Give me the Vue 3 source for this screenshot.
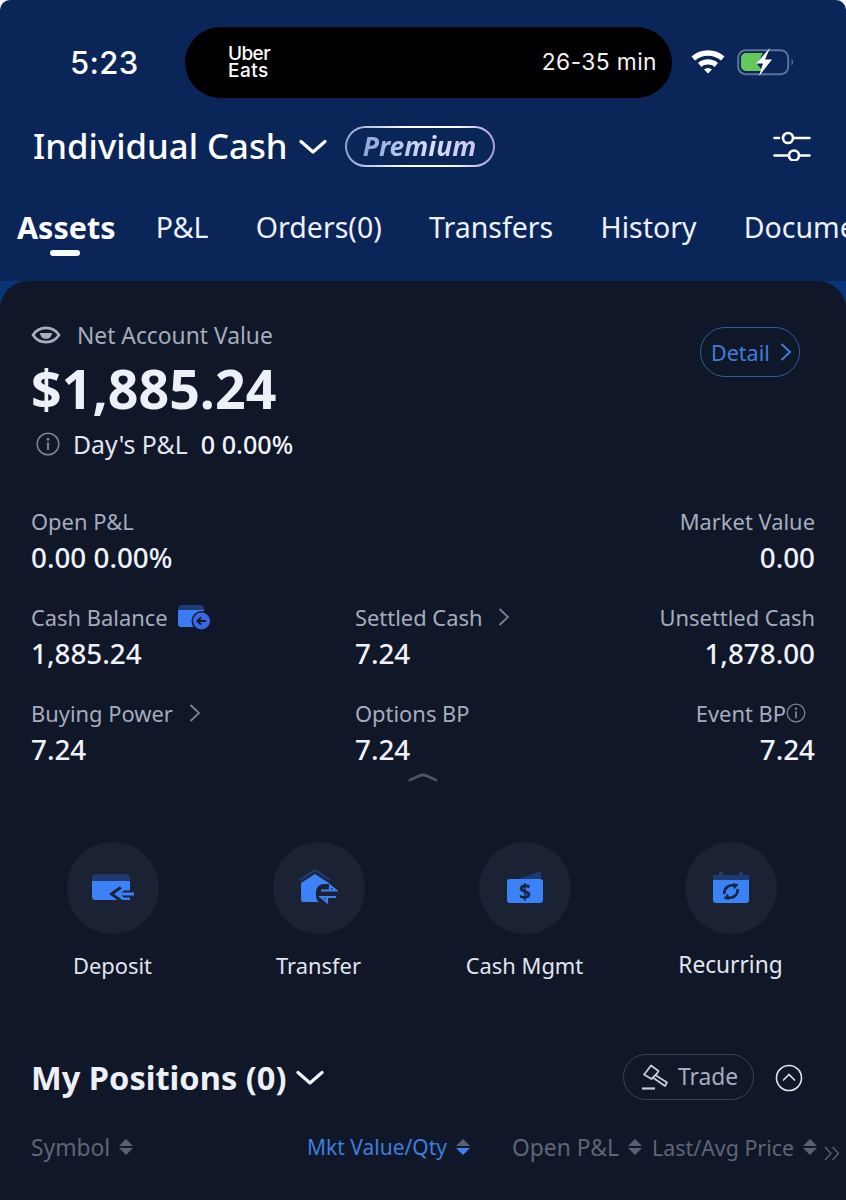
<script setup>
const tabs = ['Assets', 'P&L', 'Orders(0)', 'Transfers', 'History', 'Documents']
</script>

<template>
  <div class="page">
    <header class="head">
      <div class="status">
        <span class="time">5:23</span>
        <div class="island">
          <span class="uber"><span class="uber-line">Uber</span><span class="uber-line eats">Eats</span></span>
          <span class="eta">26-35 min</span>
        </div>
        <svg class="wifi" width="36" height="26" viewBox="0 0 36 26">
          <path d="M1.500 8.500C10.500 0 25.500 0 34.500 8.500L31 12.500C24 6 12 6 5 12.500Z" fill="#fff" />
          <path d="M8 15C13.500 10 22.500 10 28 15L24.500 19C21 15.800 15 15.800 11.500 19Z" fill="#fff" />
          <path d="M14 21.500C16.500 19.500 19.500 19.500 22 21.500L18 25.500Z" fill="#fff" />
        </svg>
        <svg class="battery" width="60" height="28" viewBox="0 0 60 28">
          <rect x="1.200" y="2.200" width="50" height="24" rx="7.500" fill="none" stroke="#5f7399" stroke-width="2" />
          <path d="M9 5H26L20 16L26 23H9A5 5 0 0 1 4 18V10A5 5 0 0 1 9 5Z" fill="#63c95a" />
          <path d="M54.500 10.500C56.500 11.500 56.500 16.500 54.500 17.500Z" fill="#5f7399" />
          <path d="M33 0L19 15.500H26L22 28L35 11.500H28Z" fill="#fff" />
        </svg>
      </div>

      <div class="title-row">
        <h1 class="title">Individual Cash</h1>
        <svg class="chev" width="28" height="16" viewBox="0 0 28 16">
          <path d="M2 2.500L14 13L26 2.500" fill="none" stroke="#fff" stroke-width="3.200" stroke-linecap="round" stroke-linejoin="round" />
        </svg>
        <div class="premium"><span class="premium-in"><span class="premium-text">Premium</span></span></div>
        <svg class="sliders" width="38" height="30" viewBox="0 0 38 30">
          <g fill="none" stroke="#fff" stroke-width="2.600" stroke-linecap="round">
            <path d="M1.500 7H6M20.500 7H36.500M1.500 24.500H14.500M27.500 24.500H36.500" />
            <circle cx="15" cy="7" r="5" />
            <circle cx="21" cy="24.500" r="5" />
          </g>
        </svg>
      </div>

      <nav class="tabs">
        <span v-for="(t, i) in tabs" :key="t" class="tab" :class="{ on: i === 0 }">{{ t }}</span>
      </nav>
    </header>

    <main class="card">
      <section class="net">
        <div class="net-main">
          <div class="net-label">
            <svg width="30" height="22" viewBox="0 0 30 22">
              <path d="M2 11C8 1.500 22 1.500 28 11C22 20.500 8 20.500 2 11Z" fill="none" stroke="#a8aebd" stroke-width="2.600" />
              <path d="M9 9H21A6 6 0 0 1 9 9Z" fill="#a8aebd" />
            </svg>
            <span>Net Account Value</span>
          </div>
          <div class="net-value">$1,885.24</div>
          <div class="days">
            <svg width="24" height="24" viewBox="0 0 24 24">
              <circle cx="12" cy="12" r="10.800" fill="none" stroke="#7c8290" stroke-width="1.500" />
              <path d="M12 10.500V18" stroke="#7c8290" stroke-width="2.200" />
              <circle cx="12" cy="7.300" r="1.500" fill="#7c8290" />
            </svg>
            <span class="days-label">Day's P&amp;L</span>
            <span class="days-val">0 0.00%</span>
          </div>
        </div>
        <div class="detail">
          <span>Detail</span>
          <svg width="12" height="20" viewBox="0 0 12 20"><path d="M1.500 2L10 10L1.500 18" fill="none" stroke="#3d7fdc" stroke-width="2" /></svg>
        </div>
      </section>

      <section class="metrics">
        <div class="m">
          <div class="ml">Open P&amp;L</div>
          <div class="mv">0.00 0.00%</div>
        </div>
        <div></div>
        <div class="m end">
          <div class="ml">Market Value</div>
          <div class="mv">0.00</div>
        </div>

        <div class="m">
          <div class="ml">
            Cash Balance
            <svg width="34" height="28" viewBox="0 0 34 28">
              <path d="M1 6A4 4 0 0 1 5 2H23A4 4 0 0 1 27 6V8H1Z" fill="#1f3a75" />
              <path d="M1 7H27V24H4A3 3 0 0 1 1 21Z" fill="#3b7cf0" />
              <circle cx="24.500" cy="18" r="10" fill="#0f1729" />
              <circle cx="24.500" cy="18" r="8.500" fill="#3a66e0" />
              <path d="M29 18H21M24 14.500L20.500 18L24 21.500" fill="none" stroke="#0f1729" stroke-width="2" />
            </svg>
          </div>
          <div class="mv">1,885.24</div>
        </div>
        <div class="m">
          <div class="ml">
            Settled Cash
            <svg class="arrow" width="12" height="20" viewBox="0 0 12 20"><path d="M1.500 2L10 10L1.500 18" fill="none" stroke="#7b808e" stroke-width="1.800" /></svg>
          </div>
          <div class="mv">7.24</div>
        </div>
        <div class="m end">
          <div class="ml">Unsettled Cash</div>
          <div class="mv">1,878.00</div>
        </div>

        <div class="m">
          <div class="ml">
            Buying Power
            <svg class="arrow" width="12" height="20" viewBox="0 0 12 20"><path d="M1.500 2L10 10L1.500 18" fill="none" stroke="#7b808e" stroke-width="1.800" /></svg>
          </div>
          <div class="mv">7.24</div>
        </div>
        <div class="m">
          <div class="ml">Options BP</div>
          <div class="mv">7.24</div>
        </div>
        <div class="m end">
          <div class="ml event">
            Event BP
            <svg width="20" height="20" viewBox="0 0 20 20">
              <circle cx="10" cy="10" r="8.800" fill="none" stroke="#7c8290" stroke-width="1.300" />
              <path d="M10 8.500V15" stroke="#7c8290" stroke-width="1.800" />
              <circle cx="10" cy="5.800" r="1.200" fill="#7c8290" />
            </svg>
          </div>
          <div class="mv">7.24</div>
        </div>
      </section>

      <div class="collapse">
        <svg width="30" height="9" viewBox="0 0 30 9"><path d="M2 7L12 2.500Q15 1.500 18 2.500L28 7" fill="none" stroke="#4b5364" stroke-width="3" stroke-linecap="round" stroke-linejoin="round" /></svg>
      </div>

      <section class="actions">
        <div class="act">
          <div class="circle">
            <svg width="42" height="30" viewBox="0 0 42 30">
              <path d="M0 5A4 4 0 0 1 4 1H34A4 4 0 0 1 38 5V8H0Z" fill="#1f3a6e" />
              <path d="M0 8H38V27H3A3 3 0 0 1 0 24Z" fill="#3b82f6" />
              <path d="M42 21H24M30 16L23 21L30 26" fill="none" stroke="#1a2233" stroke-width="7" />
              <path d="M42 21H27M31 16.500L24.500 21L31 25.500" fill="none" stroke="#3b82f6" stroke-width="2.800" />
            </svg>
          </div>
          <span class="act-label">Deposit</span>
        </div>
        <div class="act">
          <div class="circle">
            <svg width="38" height="36" viewBox="0 0 38 36">
              <path d="M0 10L15 0L30 10" fill="none" stroke="#1f3a6e" stroke-width="2.500" />
              <path d="M1 13L15 4L29 13V32H3A2 2 0 0 1 1 30Z" fill="#3b82f6" />
              <rect x="16" y="14" width="22" height="20" rx="8" fill="#1a2233" />
              <path d="M21 20.500H36L30 15.500V20.500" fill="none" stroke="#3b82f6" stroke-width="2.200" />
              <path d="M36 27H21L27 32V27" fill="none" stroke="#3b82f6" stroke-width="2.200" />
            </svg>
          </div>
          <span class="act-label">Transfer</span>
        </div>
        <div class="act">
          <div class="circle">
            <svg width="38" height="34" viewBox="0 0 38 34">
              <path d="M12 8L32 1A2 2 0 0 1 35 3V8Z" fill="#1f3a6e" />
              <rect x="1" y="8" width="36" height="24" rx="3" fill="#3b82f6" />
              <text class="dollar" x="19" y="27.500" text-anchor="middle">$</text>
            </svg>
          </div>
          <span class="act-label">Cash Mgmt</span>
        </div>
        <div class="act">
          <div class="circle">
            <svg width="36" height="34" viewBox="0 0 36 34">
              <path d="M0 4H6V1H10V4H26V1H30V4H36V9H0Z" fill="#1f3a6e" />
              <path d="M0 9H36V29A3 3 0 0 1 33 32H3A3 3 0 0 1 0 29Z" fill="#3b82f6" />
              <g fill="none" stroke="#17233f" stroke-width="2.600">
                <path d="M11.500 23A7.500 7.500 0 0 1 22 15" />
                <path d="M24.500 18A7.500 7.500 0 0 1 14 26" />
              </g>
              <path d="M20 12L25.500 13.500L21 18.500ZM16 29L10.500 27.500L15 22.500Z" fill="#17233f" />
            </svg>
          </div>
          <span class="act-label last">Recurring</span>
        </div>
      </section>

      <section class="pos-head">
        <h2 class="pos-title">My Positions (0)</h2>
        <svg class="chev2" width="28" height="16" viewBox="0 0 28 16">
          <path d="M2 2.500L14 13L26 2.500" fill="none" stroke="#f0f2f8" stroke-width="3.200" stroke-linecap="round" stroke-linejoin="round" />
        </svg>
        <div class="trade">
          <svg width="28" height="26" viewBox="0 0 28 26">
            <g fill="none" stroke="#c8ccd6" stroke-width="1.800" stroke-linejoin="round">
              <path d="M10 1.500L17.500 7L16 9.500L10.500 15L3 10.500L5.500 7.500Z" />
              <path d="M15 11.500L26 18.500L24 22L12.500 14" />
            </g>
            <path d="M1 24.500H14" stroke="#c8ccd6" stroke-width="2.200" />
          </svg>
          <span>Trade</span>
        </div>
        <svg class="up" width="28" height="28" viewBox="0 0 28 28">
          <circle cx="14" cy="14" r="12.500" fill="none" stroke="#dfe2ea" stroke-width="1.600" />
          <path d="M8 16.500L14 10.500L20 16.500" fill="none" stroke="#dfe2ea" stroke-width="1.600" />
        </svg>
      </section>

      <section class="cols">
        <div class="col c1">Symbol<i class="sort"><b></b><b></b></i></div>
        <div class="col c2">Mkt Value/Qty<i class="sort active"><b></b><b></b></i></div>
        <div class="col c3">Open P&amp;L<i class="sort"><b></b><b></b></i></div>
        <div class="col c4">Last/Avg Price<i class="sort"><b></b><b></b></i></div>
        <svg class="more" width="16" height="15" viewBox="0 0 16 15">
          <path d="M1 1L7 7.500L1 14M8.500 1L14.500 7.500L8.500 14" fill="none" stroke="#5a6070" stroke-width="1.400" />
        </svg>
      </section>
    </main>
  </div>
</template>

<style>
html, body { margin: 0; background: #f5f6f8; }
</style>

<style scoped>
.page {
  width: 846px;
  height: 1200px;
  overflow: hidden;
  background: linear-gradient(#0a2558 281px, #0a3478 281px);
  border-radius: 10px 10px 0 0;
  font-family: "Noto Sans", "Open Sans", sans-serif;
  display: flex;
  flex-direction: column;
  position: relative;
}
.head {
  height: 281px;
  flex: none;
  box-sizing: border-box;
  padding-top: 27px;
  color: #fff;
  overflow: hidden;
}
.status {
  display: flex;
  align-items: center;
  height: 71px;
}
.time {
  font: 500 31px/1 Inter, sans-serif;
  width: 185px;
  box-sizing: border-box;
  padding-left: 70px;
  letter-spacing: 0.4px;
  margin-top: -1px;
}
.island {
  width: 487px;
  height: 71px;
  background: #000;
  border-radius: 36px;
  display: flex;
  align-items: center;
  justify-content: space-between;
  box-sizing: border-box;
  padding: 0 15px 0 43px;
}
.uber {
  display: flex;
  flex-direction: column;
  gap: 1px;
  font: 500 19px/16px Inter, sans-serif;
  letter-spacing: -0.6px;
  margin-top: -1px;
}
.uber-line { display: block; }
.eats { letter-spacing: 0.5px; }
.eta {
  font: 400 22.800px/1 Inter, sans-serif;
  letter-spacing: 0.4px;
  color: #f2f2f2;
}
.wifi { margin-left: 18px; margin-top: -4px; }
.battery { margin-left: 11px; margin-top: -2px; }

.title-row {
  display: flex;
  align-items: center;
  height: 42px;
  margin-top: 27px;
  padding-left: 33px;
}
.title {
  margin: 0;
  font-size: 34.700px;
  font-weight: 500;
  line-height: 42px;
  color: #fff;
}
.chev { margin-left: 11px; margin-top: 1px; }
.premium {
  margin-left: 18px;
  width: 150px;
  height: 41px;
  border-radius: 21px;
  padding: 2px;
  box-sizing: border-box;
  background: linear-gradient(95deg, #8da0d0, #ffffff 40%, #ffffff 72%, #a894dc);
}
.premium-in {
  display: flex;
  align-items: center;
  justify-content: center;
  width: 100%;
  height: 100%;
  border-radius: 20px;
  background: #0a2558;
}
.premium-text {
  font-size: 26.500px;
  font-style: italic;
  font-weight: 700;
  line-height: 36px;
  background: linear-gradient(90deg, #8ea6dc, #d8dff5 60%, #cfc5f2);
  -webkit-background-clip: text;
  background-clip: text;
  color: transparent;
}
.sliders { margin-left: auto; margin-right: 35px; }

.tabs {
  display: flex;
  gap: 47.300px;
  margin-top: 39px;
  padding-left: 17px;
  white-space: nowrap;
}
.tab {
  font-size: 28.500px;
  line-height: 42px;
  color: #eef1f8;
  position: relative;
  flex: none;
}
.tab.on { font-size: 30.500px; font-weight: 700; color: #fff; margin-right: -7px; }
.tab.on::after {
  content: "";
  position: absolute;
  left: 33px;
  top: 44px;
  width: 30px;
  height: 6px;
  border-radius: 3px;
  background: #fff;
}

.card {
  flex: 1;
  background: #0f1729;
  border-radius: 28px 28px 0 0;
  padding: 0 31px;
  box-sizing: border-box;
}
.net {
  display: flex;
  justify-content: space-between;
  align-items: flex-start;
  height: 224px;
}
.net-main { padding-top: 37px; }
.net-label {
  display: flex;
  align-items: center;
  gap: 16px;
  height: 34px;
  font-size: 22.800px;
  color: #a6acbc;
}
.net-value {
  font-size: 53.700px;
  font-weight: 700;
  line-height: 60px;
  color: #eef0f7;
  margin-top: 7px;
}
.days {
  display: flex;
  align-items: center;
  height: 36px;
  margin-top: 7px;
  padding-left: 5px;
}
.days-label {
  font-size: 24.800px;
  color: #e2e5ee;
  margin-left: 13px;
}
.days-val {
  font-size: 25.200px;
  font-weight: 500;
  color: #f2f4fa;
  margin-left: 13px;
}
.detail {
  margin-top: 46px;
  margin-right: 15px;
  width: 100px;
  height: 50px;
  box-sizing: border-box;
  border: 1px solid #2e5ea8;
  border-radius: 25px;
  display: flex;
  align-items: center;
  gap: 10px;
  padding-left: 10px;
  color: #3d7fdc;
  font-size: 21.500px;
}

.metrics {
  display: grid;
  grid-template-columns: 324px 1fr auto;
  grid-auto-rows: 96px;
}
.m { display: flex; flex-direction: column; }
.m.end { align-items: flex-end; text-align: right; }
.ml {
  display: flex;
  align-items: center;
  height: 32px;
  font-size: 21.900px;
  color: #a6acbc;
  white-space: nowrap;
}
.ml svg { margin-left: 9px; }
.ml .arrow { margin-left: 16px; }
.ml.event svg { margin-left: 0; margin-right: 9px; }
.mv {
  font-size: 27.800px;
  font-weight: 500;
  line-height: 38px;
  color: #f0f2f8;
  margin-top: 1px;
}

.collapse {
  display: flex;
  justify-content: center;
  height: 10px;
  margin-top: -20px;
  margin-left: -31px;
  margin-right: -31px;
}
.actions {
  display: grid;
  grid-template-columns: repeat(4, 206px);
  margin: 59px -21px 0 -21.500px;
}
.act {
  display: flex;
  flex-direction: column;
  align-items: center;
}
.circle {
  width: 92px;
  height: 92px;
  border-radius: 50%;
  background: #1a2233;
  display: flex;
  align-items: center;
  justify-content: center;
}
.act-label {
  margin-top: 15px;
  font-size: 21.900px;
  line-height: 34px;
  color: #e2e5ee;
}
.act-label.last { font-size: 22.700px; margin-top: 14px; margin-bottom: 1px; }
.dollar {
  font-family: "Noto Sans", sans-serif;
  font-weight: 700;
  font-size: 21px;
  fill: #17233f;
}

.pos-head {
  display: flex;
  align-items: center;
  height: 48px;
  margin-top: 71px;
}
.pos-title {
  margin: 0;
  font-size: 32.600px;
  font-weight: 700;
  line-height: 48px;
  color: #eef0f7;
}
.chev2 { margin-left: 10px; }
.trade {
  margin-left: auto;
  margin-top: -3px;
  width: 131px;
  height: 46px;
  box-sizing: border-box;
  border: 1px solid #3c4252;
  border-radius: 23px;
  display: flex;
  align-items: center;
  gap: 9px;
  padding-left: 17px;
  font-size: 22.800px;
  color: #a6acbc;
}
.up { margin-left: 21px; margin-right: 12px; }

.cols {
  position: relative;
  display: flex;
  align-items: center;
  height: 36px;
  margin-top: 27px;
  font-size: 22.800px;
  color: #5f6575;
  white-space: nowrap;
}
.col { display: flex; align-items: center; flex: none; }
.c1 { width: 276px; }
.c2 { width: 205px; color: #3d7fdc; font-size: 21px; }
.c3 { width: 140px; }
.c4 { font-size: 21.400px; }
.sort {
  display: inline-flex;
  flex-direction: column;
  gap: 2px;
  margin-left: 9px;
}
.sort b {
  width: 0;
  height: 0;
  border-left: 7px solid transparent;
  border-right: 7px solid transparent;
  border-bottom: 7px solid #5a6072;
}
.sort b + b {
  border-bottom: 0;
  border-top: 7px solid #5a6072;
}
.sort.active b + b { border-top-color: #3d82f0; }
.more { position: absolute; right: -25px; top: 17px; }
</style>
